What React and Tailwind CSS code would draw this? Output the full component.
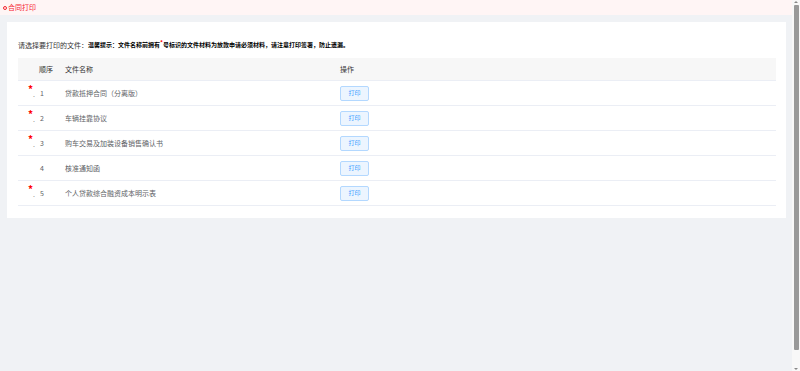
import React from "react";

const rows = [
  { req: true, n: 1, name: "贷款抵押合同（分离版）" },
  { req: true, n: 2, name: "车辆挂靠协议" },
  { req: true, n: 3, name: "购车交易及加装设备销售确认书" },
  { req: false, n: 4, name: "核准通知函" },
  { req: true, n: 5, name: "个人贷款综合融资成本明示表" },
];

export default function App() {
  return (
    <div
      className="flex w-[800px] h-[371px] overflow-hidden"
      style={{ fontFamily: '"Noto Sans CJK SC", "Noto Sans", sans-serif' }}
    >
      <div className="flex-1 flex flex-col bg-[#f0f2f5]">
        <div className="h-[15px] shrink-0 bg-[#fff5f5] flex items-center pl-[3px] gap-[1px] text-[#f5222d] text-[7px] leading-none">
          <span className="w-[4px] h-[4px] rounded-full border border-[#f5222d]"></span>
          <span>合同打印</span>
        </div>
        <div className="pt-[7px] pl-[7px] pr-[6px]">
          <div className="bg-white pt-[18px] pl-[11px] pr-[10px] pb-[12px]">
            <div className="flex items-center h-[10px] mb-[8px]">
              <span className="text-[7px] text-[#333] leading-none">请选择要打印的文件：</span>
              <span className="text-[6px] font-bold text-black leading-none">
                温馨提示：文件名称前拥有
                <span className="text-[#f00] relative top-[-2px]">*</span>
                号标识的文件材料为放款申请必须材料，请注意打印签署，防止遗漏。
              </span>
            </div>
            <div className="grid grid-cols-[47px_275px_1fr] h-[23px] items-center bg-[#f7f7f7] border-b border-[#ebeef5] text-[7px] text-[#333] leading-none">
              <span className="pl-[21px]">顺序</span>
              <span>文件名称</span>
              <span>操作</span>
            </div>
            {rows.map((r) => (
              <div
                key={r.n}
                className="grid grid-cols-[47px_275px_1fr] h-[25px] items-center border-b border-[#ebeef5] text-[7px] text-[#606266] leading-none"
              >
                <span className="flex items-center pl-[10px]">
                  <span className="w-[12px] h-[10px] relative">
                    {r.req && (
                      <>
                        <span className="absolute left-0 top-[-4px] text-[#f00] text-[10px] font-bold leading-none">*</span>
                        <span className="absolute left-[5px] top-[3px] text-[#888] text-[7px] leading-none">.</span>
                      </>
                    )}
                  </span>
                  <span>{r.n}</span>
                </span>
                <span>{r.name}</span>
                <span>
                  <span className="inline-flex w-[29px] h-[15px] items-center justify-center rounded-[2px] border border-[#b3d8ff] bg-[#ecf5ff] text-[#409eff] text-[6px]">
                    打印
                  </span>
                </span>
              </div>
            ))}
          </div>
        </div>
      </div>
      <div className="w-[8px] shrink-0 bg-[#f8f8f8] flex flex-col items-center">
        <div className="h-[4px] w-full flex items-center justify-center">
          <span className="w-0 h-0 border-l-[2px] border-r-[2px] border-b-[2px] border-transparent border-b-[#888]"></span>
        </div>
        <div className="w-[5px] h-[345px] bg-[#999] rounded-[1px] mt-[1px]"></div>
        <div className="flex-1"></div>
        <div className="h-[4px] w-full flex items-center justify-center">
          <span className="w-0 h-0 border-l-[2px] border-r-[2px] border-t-[2px] border-transparent border-t-[#888]"></span>
        </div>
      </div>
    </div>
  );
}
